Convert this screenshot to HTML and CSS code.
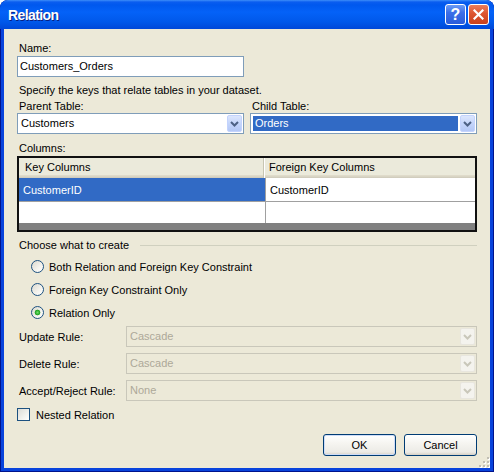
FILE: index.html
```html
<!DOCTYPE html>
<html lang="en">
<head>
    <meta charset="UTF-8">
    <title>Relation</title>
    <link rel="stylesheet" href="styles.css">
</head>
<body>
    <div class="window">
        <div class="titlebar">
            <span class="title">Relation</span>
            <div class="caption-buttons">
                <span class="cap-btn help">?</span>
                <span class="cap-btn close">
                    <svg width="11" height="11" viewBox="0 0 11 11"><path d="M1.5 1.5 L9.5 9.5 M9.5 1.5 L1.5 9.5" stroke="#fff" stroke-width="2.2" stroke-linecap="square"/></svg>
                </span>
            </div>
        </div>

        <div class="client">
            <div class="label">Name:</div>
            <div class="textbox name-box">Customers_Orders</div>

            <div class="hint">Specify the keys that relate tables in your dataset.</div>

            <div class="tables">
                <div class="pick">
                    <div class="label">Parent Table:</div>
                    <div class="combo">
                        <span class="combo-text">Customers</span>
                        <span class="drop"><svg width="9" height="6" viewBox="0 0 9 6"><path d="M1 1 L4.5 4.5 L8 1" fill="none" stroke="#4D6185" stroke-width="2"/></svg></span>
                    </div>
                </div>
                <div class="pick">
                    <div class="label">Child Table:</div>
                    <div class="combo">
                        <span class="combo-text selected">Orders</span>
                        <span class="drop"><svg width="9" height="6" viewBox="0 0 9 6"><path d="M1 1 L4.5 4.5 L8 1" fill="none" stroke="#4D6185" stroke-width="2"/></svg></span>
                    </div>
                </div>
            </div>

            <div class="label cols-label">Columns:</div>
            <div class="grid">
                <div class="grid-head">
                    <div class="hcell first">Key Columns</div>
                    <div class="hcell second">Foreign Key Columns</div>
                </div>
                <div class="grid-row row-one">
                    <div class="cell first sel">CustomerID</div>
                    <div class="cell second">CustomerID</div>
                </div>
                <div class="grid-row row-two">
                    <div class="cell first"></div>
                    <div class="cell second"></div>
                </div>
                <div class="grid-foot"></div>
            </div>

            <div class="group-title">
                <span>Choose what to create</span>
                <span class="rule"></span>
            </div>

            <div class="radios">
                <div class="radio-row"><span class="radio"></span>Both Relation and Foreign Key Constraint</div>
                <div class="radio-row"><span class="radio"></span>Foreign Key Constraint Only</div>
                <div class="radio-row"><span class="radio checked"></span>Relation Only</div>
            </div>

            <div class="rules">
                <div class="rule-row">
                    <span class="rule-label">Update Rule:</span>
                    <div class="combo disabled">
                        <span class="combo-text">Cascade</span>
                        <span class="drop"><svg width="9" height="6" viewBox="0 0 9 6"><path d="M1 1 L4.5 4.5 L8 1" fill="none" stroke="#C9C7BA" stroke-width="2"/></svg></span>
                    </div>
                </div>
                <div class="rule-row">
                    <span class="rule-label">Delete Rule:</span>
                    <div class="combo disabled">
                        <span class="combo-text">Cascade</span>
                        <span class="drop"><svg width="9" height="6" viewBox="0 0 9 6"><path d="M1 1 L4.5 4.5 L8 1" fill="none" stroke="#C9C7BA" stroke-width="2"/></svg></span>
                    </div>
                </div>
                <div class="rule-row">
                    <span class="rule-label">Accept/Reject Rule:</span>
                    <div class="combo disabled">
                        <span class="combo-text">None</span>
                        <span class="drop"><svg width="9" height="6" viewBox="0 0 9 6"><path d="M1 1 L4.5 4.5 L8 1" fill="none" stroke="#C9C7BA" stroke-width="2"/></svg></span>
                    </div>
                </div>
            </div>

            <div class="check-row"><span class="checkbox"></span>Nested Relation</div>

            <div class="buttons">
                <span class="button default">OK</span>
                <span class="button">Cancel</span>
            </div>

            <div class="grip-row">
                <svg width="12" height="12" viewBox="0 0 12 12">
                    <!-- highlights -->
                    <rect x="10" y="2" width="2" height="2" fill="#fff"/>
                    <rect x="6" y="6" width="2" height="2" fill="#fff"/>
                    <rect x="10" y="6" width="2" height="2" fill="#fff"/>
                    <rect x="2" y="10" width="2" height="2" fill="#fff"/>
                    <rect x="6" y="10" width="2" height="2" fill="#fff"/>
                    <rect x="10" y="10" width="2" height="2" fill="#fff"/>
                    <!-- dots -->
                    <rect x="9" y="1" width="2" height="2" fill="#C1BEB3"/>
                    <rect x="5" y="5" width="2" height="2" fill="#C1BEB3"/>
                    <rect x="9" y="5" width="2" height="2" fill="#C1BEB3"/>
                    <rect x="1" y="9" width="2" height="2" fill="#C1BEB3"/>
                    <rect x="5" y="9" width="2" height="2" fill="#C1BEB3"/>
                    <rect x="9" y="9" width="2" height="2" fill="#C1BEB3"/>
                </svg>
            </div>
        </div>
    </div>
</body>
</html>
```

FILE: styles.css
```css
body {
    margin: 0;
    background: #fff;
    font-family: "Liberation Sans", Arial, sans-serif;
    font-size: 11px;
    color: #000;
}

/* window frame */
.window {
    width: 494px;
    height: 472px;
    display: flex;
    flex-direction: column;
    border-radius: 8px 8px 0 0;
    background: #0843DC;
    box-shadow: inset 0 0 0 1px #00138C;
    overflow: hidden;
}
.titlebar {
    height: 29px;
    flex: none;
    display: flex;
    align-items: center;
    padding: 0 5px 0 8px;
    background: linear-gradient(to bottom, #3D8EF9 0, #0A5DF0 2px, #0058EE 5px, #0462F8 12px, #0058EA 22px, #0048D8 29px);
}
.title {
    flex: 1;
    color: #fff;
    font-weight: bold;
    font-size: 14px;
    letter-spacing: -0.6px;
    text-shadow: 1px 1px 0 #0A1E80;
}
.caption-buttons {
    display: flex;
    gap: 2px;
}
.cap-btn {
    width: 19px;
    height: 19px;
    border: 1px solid #fff;
    border-radius: 3px;
    display: flex;
    align-items: center;
    justify-content: center;
}
.help {
    background: linear-gradient(to bottom, #6C9BF5 0, #3C6FE8 40%, #2A5BDA 100%);
    color: #fff;
    font-weight: bold;
    font-size: 16px;
    line-height: 19px;
}
.close {
    background: linear-gradient(to bottom, #EB7D5A 0, #DD5530 45%, #C9411C 100%);
}

/* dialog body */
.client {
    flex: 1;
    margin: 0 4px 4px;
    background: #ECE9D8;
    padding: 13px 13px 0;
    display: flex;
    flex-direction: column;
}
.label {
    line-height: 13px;
    padding-left: 2px;
}
.textbox {
    width: 227px;
    height: 21px;
    box-sizing: border-box;
    border: 1px solid #7F9DB9;
    background: #fff;
    padding-left: 2px;
    line-height: 19px;
    margin-top: 1px;
}
.hint {
    margin-top: 7px;
    line-height: 13px;
    padding-left: 2px;
}
.tables {
    display: flex;
    gap: 6px;
    margin-top: 3px;
}
.pick {
    width: 227px;
}

/* combo boxes */
.combo {
    height: 21px;
    box-sizing: border-box;
    display: flex;
    border: 1px solid #7F9DB9;
    background: #fff;
    padding: 1px;
}
.combo-text {
    flex: 1;
    padding-left: 2px;
    line-height: 17px;
}
.combo-text.selected {
    margin: 1px 2px 1px 1px;
    background: #316AC5;
    color: #fff;
    line-height: 15px;
}
.drop {
    width: 15px;
    box-sizing: border-box;
    border: 1px solid #C3D3FD;
    border-radius: 2px;
    background: linear-gradient(to bottom, #DCE6FD 0, #C4D5FB 50%, #B4C8F6 100%);
    display: flex;
    align-items: center;
    justify-content: center;
}
.combo.disabled {
    width: 351px;
    border-color: #C9C7BA;
    background: #ECE9D8;
    color: #ACA899;
}
.combo.disabled .drop {
    border-color: #E8E6DE;
    background: #F4F3EE;
}

/* columns grid */
.cols-label {
    margin-top: 8px;
}
.grid {
    margin-top: 1px;
    width: 460px;
    box-sizing: border-box;
    border: 2px solid #111;
    background: #fff;
}
.grid-head {
    display: flex;
    height: 20px;
    background: linear-gradient(to bottom, #EBEADB 0, #EBEADB 17px, #E2DECD 17px, #D6D2C2 19px, #CBC7B8 20px);
}
.hcell {
    line-height: 19px;
}
.hcell.first {
    width: 245px;
    padding-left: 6px;
    box-sizing: border-box;
    border-right: 1px solid #C7C5B2;
}
.hcell.second {
    flex: 1;
    padding-left: 4px;
    border-left: 1px solid #fff;
}
.grid-row {
    display: flex;
}
.row-one {
    height: 24px;
    border-bottom: 1px solid #A0A0A0;
    box-sizing: border-box;
}
.row-two {
    height: 21px;
}
.cell {
    line-height: 25px;
}
.cell.first {
    width: 246px;
    padding-left: 4px;
    box-sizing: border-box;
}
.cell.second {
    flex: 1;
    padding-left: 4px;
    border-left: 1px solid #A0A0A0;
}
.cell.sel {
    background: #316AC5;
    color: #fff;
}
.grid-foot {
    height: 7px;
    background: #808080;
}

/* option group */
.group-title {
    margin-top: 7px;
    display: flex;
    align-items: center;
    line-height: 13px;
    padding-left: 2px;
}
.group-title .rule {
    flex: 1;
    height: 1px;
    margin-left: 11px;
    background: #D0D0BF;
}
.radios {
    margin-top: 3px;
}
.radio-row {
    height: 23px;
    display: flex;
    align-items: center;
    padding-left: 14px;
}
.radio {
    width: 13px;
    height: 13px;
    box-sizing: border-box;
    border: 1px solid #1C5180;
    border-radius: 50%;
    background: linear-gradient(135deg, #DCD9CE 0, #F4F3EE 60%, #fff 100%);
    margin-right: 5px;
}
.radio.checked {
    background: radial-gradient(circle at 50% 50%, #6EE06A 0, #21A121 2.5px, transparent 3.2px),
                linear-gradient(135deg, #DCD9CE 0, #F4F3EE 60%, #fff 100%);
}

/* rule rows */
.rules {
    margin-top: 2px;
    display: flex;
    flex-direction: column;
    gap: 6px;
}
.rule-row {
    display: flex;
    align-items: center;
}
.rule-label {
    width: 109px;
    padding-left: 2px;
    box-sizing: border-box;
}

.check-row {
    margin-top: 7px;
    height: 13px;
    display: flex;
    align-items: center;
}
.checkbox {
    width: 13px;
    height: 13px;
    box-sizing: border-box;
    border: 1px solid #1C5180;
    background: linear-gradient(135deg, #DCDCD7 0, #F2F2EE 60%, #fff 100%);
    margin-right: 6px;
}

/* buttons */
.buttons {
    margin-top: 13px;
    display: flex;
    justify-content: flex-end;
    gap: 8px;
}
.button {
    width: 73px;
    height: 22px;
    box-sizing: border-box;
    border: 1px solid #003C74;
    border-radius: 3px;
    background: linear-gradient(to bottom, #fff 0, #F6F5F1 40%, #ECEBE6 85%, #D6D0C5 100%);
    text-align: center;
    line-height: 20px;
}
.button.default {
    box-shadow: inset 0 0 0 1px #CEDCF7;
}
.grip-row {
    height: 12px;
    display: flex;
    justify-content: flex-end;
    margin-right: -13px;
}
```
